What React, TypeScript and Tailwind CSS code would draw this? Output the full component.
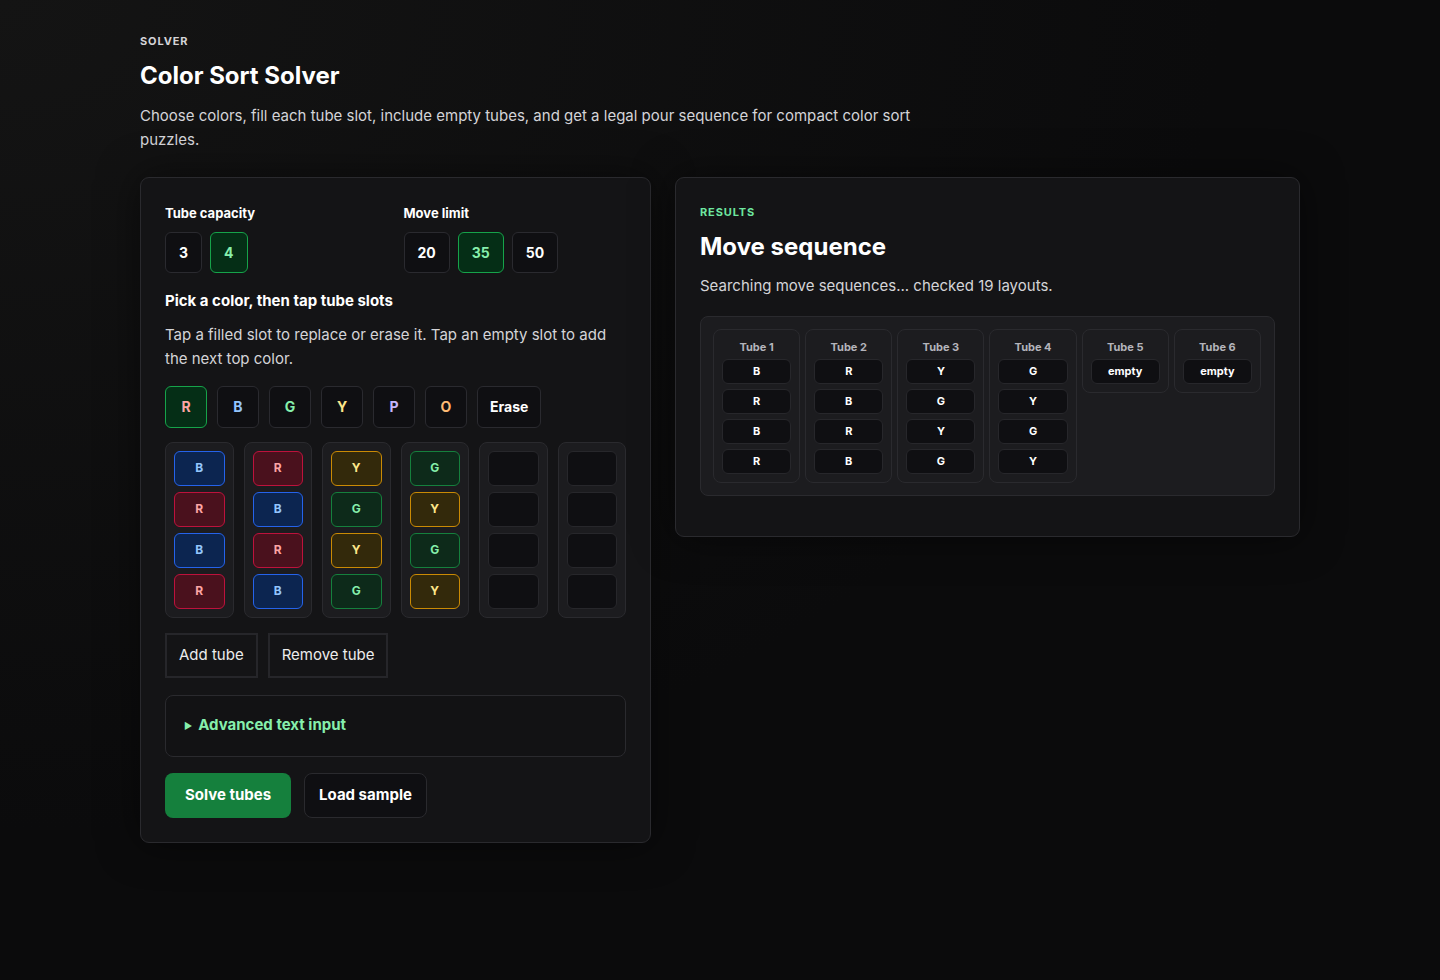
import React, { useState } from "react";

type Color = "R" | "B" | "G" | "Y" | "P" | "O";

const palette: Record<Color, { text: string; slot: string }> = {
  R: { text: "text-[#fca5a5]", slot: "bg-[#4a111d] border-[#be123c] text-[#fca5a5]" },
  B: { text: "text-[#93c5fd]", slot: "bg-[#0c2550] border-[#2563eb] text-[#93c5fd]" },
  G: { text: "text-[#86efac]", slot: "bg-[#0d2a1a] border-[#15803d] text-[#86efac]" },
  Y: { text: "text-[#fde68a]", slot: "bg-[#33290b] border-[#ca8a04] text-[#fde68a]" },
  P: { text: "text-[#c4b5fd]", slot: "bg-[#2e1065] border-[#7c3aed] text-[#c4b5fd]" },
  O: { text: "text-[#fdba74]", slot: "bg-[#431407] border-[#ea580c] text-[#fdba74]" },
};

const startTubes: (Color | null)[][] = [
  ["B", "R", "B", "R"],
  ["R", "B", "R", "B"],
  ["Y", "G", "Y", "G"],
  ["G", "Y", "G", "Y"],
  [null, null, null, null],
  [null, null, null, null],
];

function Chip({ label, active, onClick }: { label: string; active?: boolean; onClick?: () => void }) {
  return (
    <button
      onClick={onClick}
      className={`h-[41px] min-w-[36px] px-[13px] rounded-md border text-[14px] font-bold ${active ? "bg-[#052e16] border-[#16a34a] text-[#86efac]" : "bg-[#0f0f12] border-[#2a2a2f] text-white"}`}
    >
      {label}
    </button>
  );
}

export default function App() {
  const [capacity, setCapacity] = useState(4);
  const [limit, setLimit] = useState(35);
  const [pick, setPick] = useState<Color | "erase">("R");
  const [tubes] = useState(startTubes);

  return (
    <div
      className="min-h-[980px] bg-[#0b0b0c] bg-[radial-gradient(ellipse_at_top_left,#141414_0%,#0b0b0c_60%)] text-white"
      style={{ fontFamily: "Inter, 'Noto Sans', sans-serif" }}
    >
      <div className="max-w-[1160px] mx-auto pt-[33px]">
        <div className="text-[11px] font-bold tracking-[0.08em] text-[#d4d4d8]">SOLVER</div>
        <h1 className="mt-[11px] text-[24px] leading-[30px] font-bold">Color Sort Solver</h1>
        <p className="mt-[13px] max-w-[780px] text-[15px] leading-6 text-[#d4d4d8]">
          Choose colors, fill each tube slot, include empty tubes, and get a legal pour sequence for compact color sort puzzles.
        </p>

        <div className="mt-[25px] grid grid-cols-[511px_1fr] gap-6 items-start">
          {/* left: editor */}
          <div className="rounded-[9px] border border-[#2a2a2e] bg-[#141416] p-6 shadow-[0_0_40px_rgba(0,0,0,0.5)]">
            <div className="grid grid-cols-2 gap-4">
              <div>
                <div className="text-[13px] font-bold leading-5 pt-[1px]">Tube capacity</div>
                <div className="mt-[9px] flex gap-2">
                  {[3, 4].map(n => (
                    <Chip key={n} label={String(n)} active={capacity === n} onClick={() => setCapacity(n)} />
                  ))}
                </div>
              </div>
              <div>
                <div className="text-[13px] font-bold leading-5 pt-[1px]">Move limit</div>
                <div className="mt-[9px] flex gap-2">
                  {[20, 35, 50].map(n => (
                    <Chip key={n} label={String(n)} active={limit === n} onClick={() => setLimit(n)} />
                  ))}
                </div>
              </div>
            </div>

            <div className="mt-[18px] text-[15px] font-bold leading-5">Pick a color, then tap tube slots</div>
            <p className="mt-[12px] text-[15px] leading-6 text-[#d4d4d8]">
              Tap a filled slot to replace or erase it. Tap an empty slot to add the next top color.
            </p>

            <div className="mt-[15px] flex gap-2.5">
              {(Object.keys(palette) as Color[]).map(c => (
                <button
                  key={c}
                  onClick={() => setPick(c)}
                  className={`w-[42px] h-[42px] rounded-md border text-[14px] font-bold ${palette[c].text} ${pick === c ? "bg-[#052e16] border-[#16a34a]" : "bg-[#0f0f12] border-[#2a2a2f]"}`}
                >
                  {c}
                </button>
              ))}
              <button
                onClick={() => setPick("erase")}
                className={`h-[42px] px-3 rounded-md border text-[14px] font-bold text-white ${pick === "erase" ? "bg-[#052e16] border-[#16a34a]" : "bg-[#0f0f12] border-[#2a2a2f]"}`}
              >
                Erase
              </button>
            </div>

            <div className="mt-[14px] grid grid-cols-6 gap-2.5">
              {tubes.map((t, i) => (
                <div key={i} className="rounded-lg border border-[#2a2a2e] bg-[#1c1c1f] p-2 flex flex-col gap-1.5">
                  {t.map((s, j) => (
                    <div
                      key={j}
                      className={`h-[35px] rounded-md border flex items-center justify-center text-[12px] font-bold ${s ? palette[s].slot : "bg-[#0f0f12] border-[#27272b]"}`}
                    >
                      {s ?? ""}
                    </div>
                  ))}
                </div>
              ))}
            </div>

            <div className="mt-[15px] flex gap-2.5">
              <button className="h-[45px] px-3 border-2 border-[#26262a] bg-[#141416] text-[15px] text-[#ececec]">Add tube</button>
              <button className="h-[45px] px-3 border-2 border-[#26262a] bg-[#141416] text-[15px] text-[#ececec]">Remove tube</button>
            </div>

            <div className="mt-[17px] h-[62px] rounded-lg border border-[#2a2a2e] bg-[#121214] px-[18px] flex items-center">
              <span className="text-[#86efac] text-[9px] mr-[6px]">▶</span>
              <span className="text-[#86efac] text-[15px] font-bold">Advanced text input</span>
            </div>

            <div className="mt-4 flex gap-[13px]">
              <button className="h-[45px] px-5 rounded-lg bg-[#15803d] text-[15px] font-bold text-white">Solve tubes</button>
              <button className="h-[45px] px-[14px] rounded-lg border border-[#2a2a2e] bg-[#0f0f12] text-[15px] font-bold text-white">Load sample</button>
            </div>
          </div>

          {/* right: results */}
          <div className="rounded-[9px] border border-[#2a2a2e] bg-[#141416] px-6 pt-6 pb-10 shadow-[0_0_40px_rgba(0,0,0,0.5)]">
            <div className="text-[11px] font-bold tracking-[0.08em] text-[#6ee7a0] leading-5">RESULTS</div>
            <h2 className="mt-[10px] text-[24px] leading-[30px] font-bold">Move sequence</h2>
            <p className="mt-[12px] text-[15px] leading-6 text-[#d4d4d8]">Searching move sequences... checked 19 layouts.</p>

            <div className="mt-[18px] rounded-lg border border-[#2a2a2e] bg-[#1c1c1f] pl-3 pr-[13px] pt-3 pb-3 grid grid-cols-6 gap-[5px] items-start">
              {tubes.map((t, i) => {
                const filled = t.filter(Boolean) as Color[];
                return (
                  <div key={i} className="rounded-lg border border-[#2a2a2e] bg-[#1c1c1f] px-2 pt-[9px] pb-2 flex flex-col gap-1">
                    <div className="text-center text-[11px] font-bold leading-4 text-[#b4b4bb]">Tube {i + 1}</div>
                    {filled.length === 0 ? (
                      <div className="h-[25px] rounded-md border border-[#27272b] bg-[#0f0f12] flex items-center justify-center text-[11px] font-bold">empty</div>
                    ) : (
                      <div className="flex flex-col gap-[5px]">
                        {filled.map((c, j) => (
                          <div key={j} className="h-[25px] rounded-md border border-[#27272b] bg-[#0f0f12] flex items-center justify-center text-[11px] font-bold">
                            {c}
                          </div>
                        ))}
                      </div>
                    )}
                  </div>
                );
              })}
            </div>
          </div>
        </div>
      </div>
    </div>
  );
}
